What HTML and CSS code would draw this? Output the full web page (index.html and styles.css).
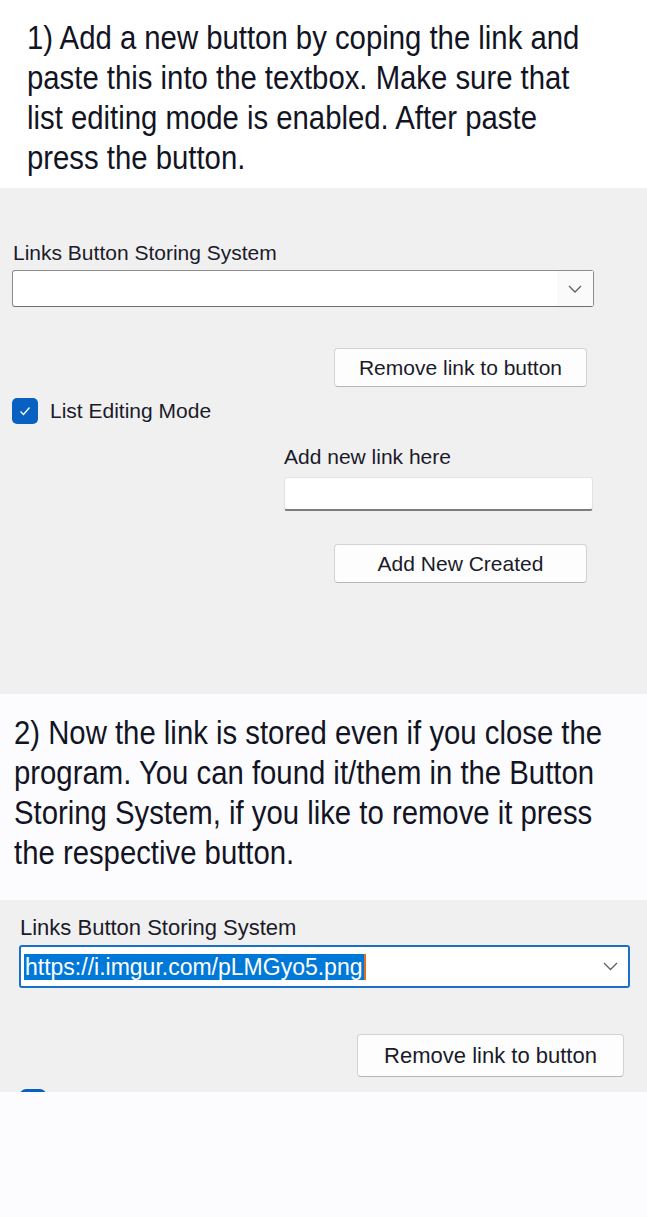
FILE: index.html
```html
<!DOCTYPE html>
<html>
<head>
<meta charset="utf-8">
<link rel="stylesheet" href="styles.css">
</head>
<body>
<section class="step step-one">
  <p class="step-text">1) Add a new button by coping the link and<br>paste this into the textbox. Make sure that<br>list editing mode is enabled. After paste<br>press the button.</p>
</section>

<section class="panel panel-one">
  <div class="ui-label label-combo">Links Button Storing System</div>
  <div class="combo combo-one">
    <span class="combo-value"></span>
    <span class="combo-arrow"><svg width="14" height="8" viewBox="0 0 14 8"><path d="M1 1 L7 7 L13 1" fill="none" stroke="#5f5f5f" stroke-width="1.3"/></svg></span>
  </div>
  <div class="btn-row btn-row-one"><button class="win-btn btn-one">Remove link to button</button></div>
  <label class="check-row">
    <span class="check-box"><svg width="14" height="12" viewBox="0 0 14 12"><path d="M2.5 6.5 L5.5 9.5 L11.5 2.5" fill="none" stroke="#fff" stroke-width="1.3"/></svg></span>
    <span class="ui-label">List Editing Mode</span>
  </label>
  <div class="add-group">
    <div class="ui-label">Add new link here</div>
    <div class="textbox"></div>
    <div class="btn-row btn-row-add"><button class="win-btn btn-one">Add New Created</button></div>
  </div>
</section>

<section class="step step-two">
  <p class="step-text">2) Now the link is stored even if you close the<br>program. You can found it/them in the Button<br>Storing System, if you like to remove it press<br>the respective button.</p>
</section>

<section class="panel panel-two">
  <div class="ui-label label-combo-two">Links Button Storing System</div>
  <div class="combo combo-two">
    <span class="combo-value"><span class="selected">https://i.imgur.com/pLMGyo5.png</span><span class="caret"></span></span>
    <span class="combo-arrow"><svg width="15" height="9" viewBox="0 0 15 9"><path d="M1 1 L7.5 7.5 L14 1" fill="none" stroke="#5f5f5f" stroke-width="1.3"/></svg></span>
  </div>
  <div class="btn-row btn-row-two"><button class="win-btn btn-two">Remove link to button</button></div>
  <div class="check-peek"></div>
</section>

<div class="tail"></div>
</body>
</html>
```

FILE: styles.css
```css
* { box-sizing: border-box; }
html, body { margin: 0; padding: 0; }
body {
  width: 647px;
  background: #fcfcff;
  overflow: hidden;
}

.step {
  background: #ffffff;
  margin: 0;
  overflow: hidden;
}
.step-text {
  margin: 0;
  width: max-content;
  font-family: "Liberation Sans", Arial, sans-serif;
  font-size: 34px;
  line-height: 40px;
  color: #121424;
  white-space: nowrap;
  transform: scaleX(0.862);
  transform-origin: left top;
}
.step-one { height: 188px; padding: 17px 0 0 27px; }
.step-two { height: 206px; padding: 18px 0 0 14px; background: #fcfcff; }

.panel {
  background: #f0f0f0;
  overflow: hidden;
  position: relative;
}
.panel-one { height: 506px; padding: 0 0 0 12px; }
.panel-two { height: 192px; padding: 0 0 0 19px; }

.ui-label {
  font-family: "Liberation Sans", Arial, sans-serif;
  font-size: 21px;
  line-height: 24px;
  color: #1b1b2a;
  white-space: nowrap;
}
.label-combo { margin: 53px 0 5px 1px; height: 24px; }

.combo {
  display: flex;
  align-items: center;
  background: #ffffff;
  border: 1.5px solid #8c8c8c;
  border-bottom-color: #6e6e6e;
  border-radius: 3px;
}
.combo-one { width: 582px; height: 37px; }
.combo-value { flex: 1; display: flex; align-items: center; height: 100%; }
.combo-arrow {
  width: 38px;
  height: 100%;
  display: flex;
  align-items: center;
  justify-content: center;
  background: #fafafa;
}
.combo-one .combo-arrow { width: 36px; }

.btn-row { display: flex; }
.btn-row-one { margin: 41px 0 0 322px; }
.win-btn {
  font-family: "Liberation Sans", Arial, sans-serif;
  color: #1b1b2a;
  background: #fdfdfd;
  border: 1px solid #d2d2d2;
  border-bottom-color: #b6b6b6;
  border-radius: 4px;
  padding: 0;
}
.btn-one { width: 253px; height: 39px; font-size: 21px; }

.check-row {
  display: flex;
  align-items: center;
  gap: 12px;
  height: 26px;
  margin: 11px 0 0 0;
}
.check-box {
  width: 26px;
  height: 26px;
  border-radius: 5px;
  background: #0860c0;
  display: flex;
  align-items: center;
  justify-content: center;
}

.add-group { margin: 21px 0 0 272px; }
.add-group .ui-label { height: 24px; margin-bottom: 8px; }
.textbox {
  width: 309px;
  height: 34px;
  background: #ffffff;
  border: 1px solid #e2e2e2;
  border-bottom: 2px solid #7c7c7c;
  border-radius: 3px;
}
.btn-row-add { margin: 33px 0 0 50px; }

.label-combo-two { margin: 16px 0 5px 1px; height: 24px; font-size: 22px; }
.combo-two {
  width: 611px;
  height: 43px;
  border: 2px solid #1a6fc8;
  border-radius: 3px;
}
.combo-two .combo-value { padding-left: 3px; }
.selected {
  background: #0078d7;
  color: #ffffff;
  font-family: "Liberation Sans", Arial, sans-serif;
  font-size: 23px;
  line-height: 26px;
  height: 26px;
  padding: 0 1px;
  white-space: nowrap;
}
.caret { width: 2px; height: 26px; background: #e07020; }
.combo-two .combo-arrow { background: #ffffff; width: 36px; }

.btn-row-two { margin: 46px 0 0 338px; }
.btn-two { width: 267px; height: 43px; font-size: 22px; }

.check-peek {
  width: 26px;
  height: 26px;
  margin: 12px 0 0 1px;
  background: #0860c0;
  border-radius: 6px;
}

.tail { height: 125px; background: #fcfcff; }
```
